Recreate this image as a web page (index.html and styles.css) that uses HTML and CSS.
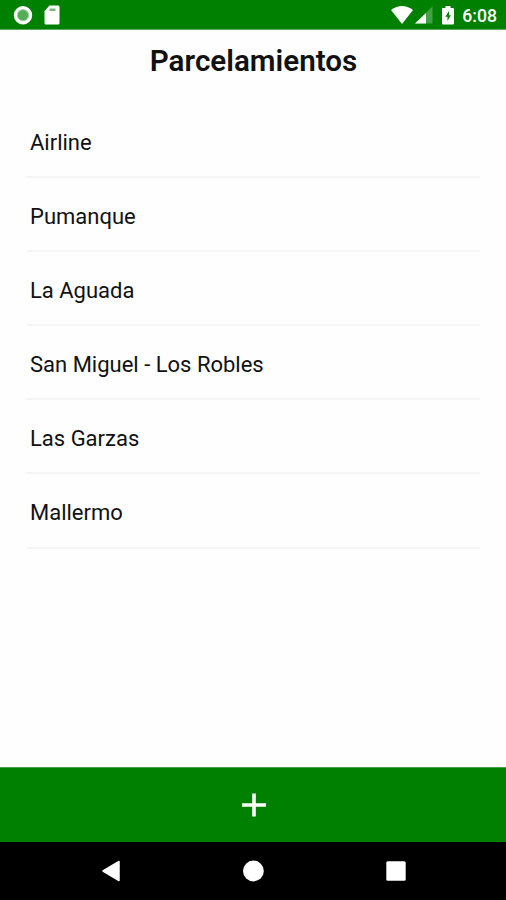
FILE: index.html
```html
<!DOCTYPE html>
<html lang="es">
<head>
    <meta charset="UTF-8">
    <meta name="viewport" content="width=device-width, initial-scale=1.0">
    <title>Parcelamientos</title>
    <link rel="stylesheet" href="styles.css">
</head>
<body>
    <header class="status-bar">
        <div class="status-left">
            <svg width="20" height="20" viewBox="0 0 20 20">
                <circle cx="10" cy="10.2" r="7.5" fill="#55ad55" stroke="#fff" stroke-width="3.4"/>
                <circle cx="10" cy="10.2" r="5.6" fill="none" stroke="#a5d3a5" stroke-width="1"/>
            </svg>
            <svg width="16" height="20" viewBox="0 0 16 20">
                <path d="M5.5 0.5H14Q15.5 0.5 15.5 2V18Q15.5 19.5 14 19.5H2Q0.5 19.5 0.5 18V6Z" fill="#fff"/>
                <path d="M5.5 3.5H11.5V6H5.5Z" fill="#7ab67a"/>
            </svg>
        </div>
        <div class="status-right">
            <svg width="22" height="18" viewBox="0 0 22 18">
                <path d="M0 4Q11-4 22 4L11 18Z" fill="#fff"/>
            </svg>
            <svg class="signal" width="18" height="18" viewBox="0 0 18 18">
                <path d="M0 17.5L17.5 0.5V17.5Z" fill="#44a044"/>
                <path d="M0 17.5L11 7V17.5Z" fill="#fff"/>
            </svg>
            <svg class="battery" width="12" height="19" viewBox="0 0 12 19">
                <path d="M3.5 0H8.500V2H11Q12 2 12 3V17.500Q12 18.500 11 18.500H1Q0 18.500 0 17.500V3Q0 2 1 2H3.500Z" fill="#fff"/>
                <path d="M7 5L3.3 10.800H5.500V15L8.800 9.300H7Z" fill="#008000"/>
            </svg>
            <span class="clock">6:08</span>
        </div>
    </header>

    <main class="content">
        <h1>Parcelamientos</h1>
        <ul class="list">
            <li>Airline</li>
            <li>Pumanque</li>
            <li>La Aguada</li>
            <li>San Miguel - Los Robles</li>
            <li>Las Garzas</li>
            <li>Mallermo</li>
        </ul>
    </main>

    <button class="add-button" type="button" aria-label="Agregar">
        <svg width="25" height="24" viewBox="0 0 25 24">
            <path d="M13 0.5V23.5M1 12H25" stroke="#fff" stroke-width="3.6"/>
        </svg>
    </button>

    <nav class="nav-bar">
        <svg width="22" height="22" viewBox="0 0 22 22">
            <path d="M19 1.5V20.5L3 11Z" fill="#fff" stroke="#fff" stroke-width="1.5" stroke-linejoin="round"/>
        </svg>
        <svg width="22" height="22" viewBox="0 0 22 22">
            <circle cx="11.4" cy="11" r="10.4" fill="#fff"/>
        </svg>
        <svg width="22" height="22" viewBox="0 0 22 22">
            <rect x="1.3" y="1.3" width="19.4" height="19.4" rx="1.5" fill="#fff"/>
        </svg>
    </nav>
</body>
</html>
```
FILE: styles.css
```css
* {
    box-sizing: border-box;
}

body {
    margin: 0;
    height: 100vh;
    display: flex;
    flex-direction: column;
    font-family: Roboto, sans-serif;
    background-color: #fefefe;
    color: #111;
}

svg {
    display: block;
}

.status-bar {
    display: flex;
    justify-content: space-between;
    height: 30px;
    padding: 5px 9px 0 13px;
    background-color: #008000;
    border-bottom: 1px solid #5fa85f;
}

.status-left,
.status-right {
    display: flex;
    align-items: flex-start;
}

.status-left {
    gap: 11px;
}

.status-right svg {
    margin-top: 1px;
}

.status-right .signal {
    margin-left: 2px;
}

.status-right .battery {
    margin-left: 9px;
}

.clock {
    margin-left: 8px;
    font-size: 17.6px;
    font-weight: 500;
    line-height: 22px;
    color: white;
}

.content {
    flex: 1;
    padding: 0 26px 0 27px;
}

h1 {
    margin: 12px 0 0;
    font-size: 29.6px;
    font-weight: 600;
    line-height: 38px;
    text-align: center;
}

.list {
    list-style: none;
    margin: 24px 0 0;
    padding: 0;
}

.list li {
    height: 74.1px;
    padding: 25px 3px 0;
    font-size: 22px;
    line-height: 28px;
    border-bottom: 2px solid #f5f5f5;
}

.add-button {
    display: flex;
    align-items: center;
    justify-content: center;
    height: 75px;
    padding: 0;
    border: none;
    border-top: 1px solid #4d9f4d;
    background-color: #008000;
    cursor: pointer;
}

.nav-bar {
    display: flex;
    align-items: center;
    justify-content: center;
    gap: 120.5px;
    height: 58px;
    background-color: black;
}
```
